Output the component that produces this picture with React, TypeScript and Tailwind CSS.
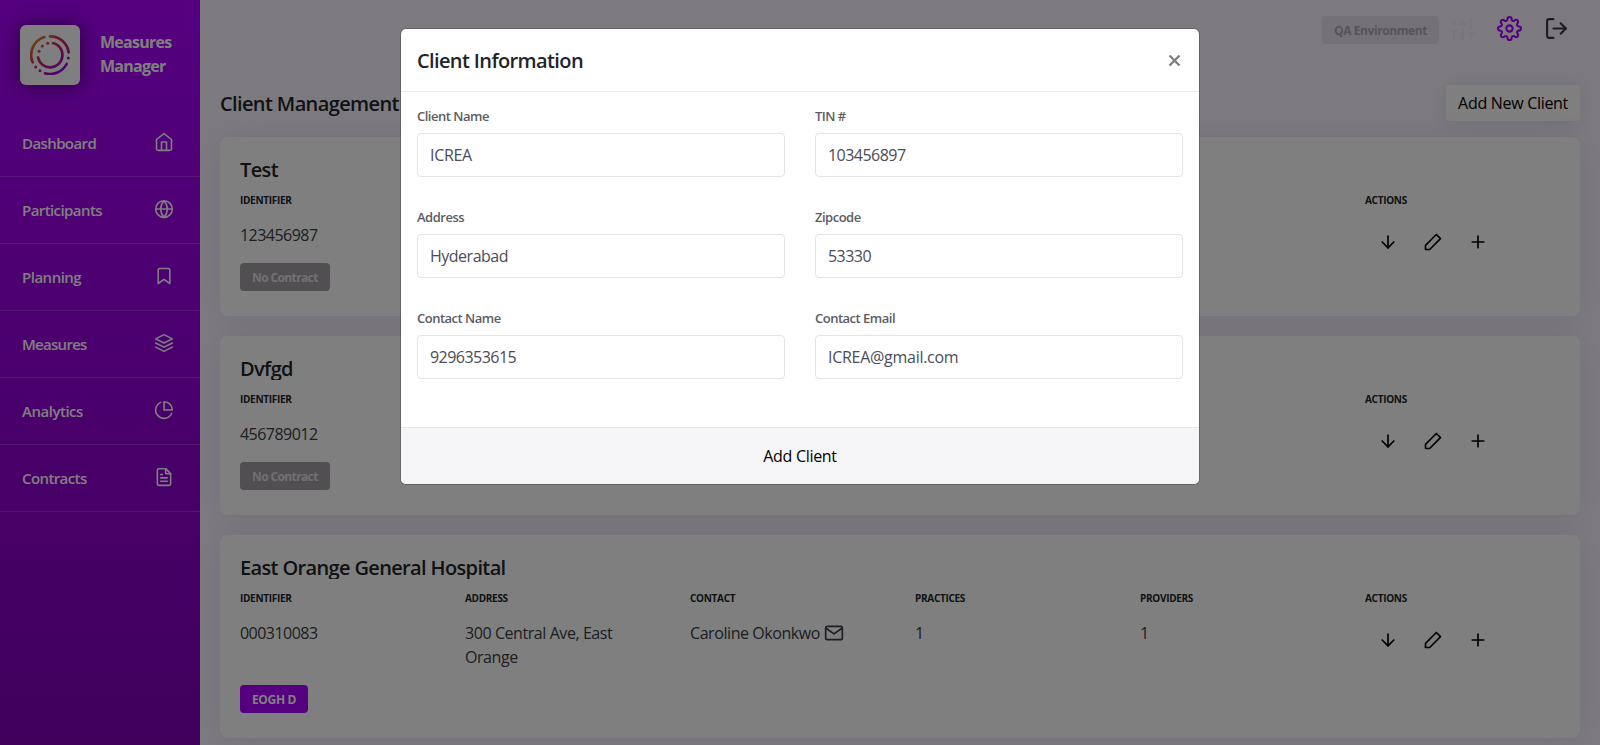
import React from "react";
import {
  FiArrowDown,
  FiBookmark,
  FiFileText,
  FiGlobe,
  FiHome,
  FiLayers,
  FiLogOut,
  FiMail,
  FiPieChart,
  FiPlus,
  FiSettings,
  FiSliders,
} from "react-icons/fi";

const navItems = [
  { label: "Dashboard", Icon: FiHome, tracking: "tracking-[-0.6px]" },
  { label: "Participants", Icon: FiGlobe, tracking: "tracking-[-0.58px]" },
  { label: "Planning", Icon: FiBookmark, tracking: "tracking-[-0.5px]" },
  { label: "Measures", Icon: FiLayers, tracking: "tracking-[-0.72px]" },
  { label: "Analytics", Icon: FiPieChart, tracking: "tracking-[-0.48px]" },
  { label: "Contracts", Icon: FiFileText, tracking: "tracking-[-0.6px]" },
];

type Client = {
  name: string;
  identifier: string;
  address?: string;
  contact?: string;
  practices?: string;
  providers?: string;
  contract?: string;
};

const clients: Client[] = [
  { name: "Test", identifier: "123456987" },
  { name: "Dvfgd", identifier: "456789012" },
  {
    name: "East Orange General Hospital",
    identifier: "000310083",
    address: "300 Central Ave, East Orange",
    contact: "Caroline Okonkwo",
    practices: "1",
    providers: "1",
    contract: "EOGH D",
  },
];

const fields = [
  { label: "Client Name", value: "ICREA", tracking: "tracking-[-0.3px]" },
  { label: "TIN #", value: "103456897", tracking: "tracking-[-0.53px]" },
  { label: "Address", value: "Hyderabad", tracking: "tracking-[-0.5px]" },
  { label: "Zipcode", value: "53330", tracking: "tracking-[-0.53px]" },
  { label: "Contact Name", value: "9296353615", tracking: "tracking-[-0.53px]" },
  { label: "Contact Email", value: "ICREA@gmail.com", tracking: "tracking-[-0.28px]" },
];

function Logo() {
  return (
    <svg width="40" height="40" viewBox="0 0 120 120" fill="none">
      <defs>
        <linearGradient id="ring" x1="10" y1="10" x2="100" y2="110" gradientUnits="userSpaceOnUse">
          <stop offset="0" stopColor="#e08a1e" />
          <stop offset="0.45" stopColor="#c8285f" />
          <stop offset="1" stopColor="#9a00e6" />
        </linearGradient>
      </defs>
      <g stroke="url(#ring)" strokeWidth="8" strokeLinecap="round">
        <path d="M8 82A56.500 56.500 0 0 1 43 6" />
        <path d="M60 4A56 56 0 0 1 116 52" />
        <path d="M110 87A56.500 56.500 0 0 1 45 115" />
        <path d="M69 24A37 37 0 1 1 24 67" />
      </g>
      <g fill="url(#ring)">
        <circle cx="115" cy="69" r="4.500" />
        <circle cx="30" cy="107" r="4.500" />
        <circle cx="17" cy="96" r="4.500" />
        <circle cx="53" cy="25" r="4.500" />
        <circle cx="37" cy="33" r="4.500" />
        <circle cx="27" cy="49" r="4.500" />
      </g>
    </svg>
  );
}

function PencilIcon() {
  return (
    <svg
      width="20"
      height="20"
      viewBox="0 0 24 24"
      fill="none"
      stroke="currentColor"
      strokeWidth="2"
      strokeLinecap="round"
      strokeLinejoin="round"
    >
      <polygon points="16 3 21 8 8 21 3 21 3 16 16 3" />
    </svg>
  );
}

function Sidebar() {
  return (
    <aside className="flex w-[200px] shrink-0 flex-col bg-linear-to-b from-[#aa00ff] to-[#8200b9] text-white">
      <div className="flex h-[110px] items-start gap-5 pt-[25px] pl-5">
        <div className="flex size-[60px] items-center justify-center rounded-md bg-white shadow-[0_0_20px_rgba(0,0,0,0.5)]">
          <Logo />
        </div>
        <div className="pt-[5px] text-[16px] leading-6 font-bold tracking-[-0.75px]">
          Measures
          <br />
          Manager
        </div>
      </div>
      <nav>
        {navItems.map(({ label, Icon, tracking }) => (
          <a
            key={label}
            className="flex h-[67px] items-center justify-between border-b border-white/20 pr-[26px] pl-[22px]"
          >
            <span className={`text-[15px] font-semibold ${tracking}`}>{label}</span>
            <Icon size={20} className="mb-0.5 stroke-[1.9]" />
          </a>
        ))}
      </nav>
    </aside>
  );
}

function Column({
  title,
  digits,
  children,
}: {
  title?: string;
  digits?: boolean;
  children?: React.ReactNode;
}) {
  return (
    <div className="w-[225px] shrink-0 pr-6 last:w-[215px] last:pr-0">
      <div className="h-[15px] text-[10px] leading-[15px] font-bold tracking-[-0.3px] text-[#212529]">{title}</div>
      <div
        className={`mt-[15px] text-[16px] leading-6 text-[#3a3d44] ${
          digits ? "tracking-[-0.53px]" : "tracking-[-0.43px]"
        }`}
      >
        {children}
      </div>
    </div>
  );
}

function ClientCard({ client }: { client: Client }) {
  return (
    <section className="rounded-lg bg-white pt-5 pb-[25px] pl-5 shadow-[0_0_30px_rgba(100,80,150,0.14)]">
      <h3 className="h-6 overflow-hidden text-[20px] leading-[26px] font-semibold tracking-[-0.64px] text-[#212529]">
        {client.name}
      </h3>
      <div className="mt-3 flex">
        <Column title="IDENTIFIER" digits>
          {client.identifier}
        </Column>
        <Column title={client.address && "ADDRESS"}>{client.address}</Column>
        <Column title={client.contact && "CONTACT"}>
          {client.contact && (
            <span className="flex items-center gap-1 whitespace-nowrap">
              {client.contact}
              <FiMail size={20} />
            </span>
          )}
        </Column>
        <Column title={client.practices && "PRACTICES"}>{client.practices}</Column>
        <Column title={client.providers && "PROVIDERS"}>{client.providers}</Column>
        <Column title="ACTIONS">
          <div className="flex h-6 items-center gap-[25px] pt-3.5 pl-[13px] text-black">
            <FiArrowDown size={20} className="shrink-0" />
            <PencilIcon />
            <FiPlus size={20} className="shrink-0" />
          </div>
        </Column>
      </div>
      <div
        className={`mt-4 flex h-7 w-fit items-center rounded px-3 pt-px text-[12px] font-bold ${
          client.contract
            ? "bg-[#aa00ff] tracking-[-0.35px] text-white"
            : "bg-[#a29fa5] tracking-[-0.62px] text-white/70"
        }`}
      >
        {client.contract ?? "No Contract"}
      </div>
    </section>
  );
}

function ClientModal() {
  return (
    <div className="absolute top-7 left-[400px] flex h-[457px] w-[800px] flex-col overflow-hidden rounded-md border border-black/20 bg-white bg-clip-padding">
      <header className="flex h-[63px] items-center justify-between border-b border-[#e9e9ed] px-4">
        <h2 className="pt-0.5 text-[20px] leading-[30px] font-semibold tracking-[-0.62px] text-[#212529]">
          Client Information
        </h2>
        <svg width="17" height="17" viewBox="0 0 17 17" stroke="#7f7f7f" strokeWidth="2.4">
          <path d="M3.500 3.500L13.500 13.500M13.500 3.500L3.500 13.500" />
        </svg>
      </header>
      <div className="grid flex-1 grid-cols-2 content-start gap-x-[30px] px-4 pt-[15px]">
        {fields.map((field) => (
          <label key={field.label} className="flex h-[101px] flex-col">
            <span className="h-[26px] text-[13px] leading-[18px] font-semibold tracking-[-0.5px] text-[#5b5c62]">
              {field.label}
            </span>
            <input
              readOnly
              value={field.value}
              className={`h-11 w-full rounded border border-[#e3e3e9] px-3 text-[16px] text-[#4a4d57] outline-none ${field.tracking}`}
            />
          </label>
        ))}
      </div>
      <footer className="flex h-[57px] items-center justify-center border-t border-[#e6e6ea] bg-[#f6f5f8]">
        <button className="text-[16px] tracking-[-0.3px] text-black">Add Client</button>
      </footer>
    </div>
  );
}

export default function App() {
  return (
    <div className="relative flex h-[745px] w-[1600px] overflow-hidden bg-[#faf5ff] font-['Open_Sans',sans-serif]">
      <Sidebar />
      <main className="flex min-w-0 flex-1 flex-col px-5">
        <div className="flex h-[85px] justify-end pt-4 pr-[11px]">
          <div className="mr-[11px] flex h-7 items-center rounded bg-[#e9e5ee] px-3 pt-px text-[12px] font-bold tracking-[-0.42px] text-[#ada9b3]">
            QA Environment
          </div>
          <div className="flex h-[25px] gap-[22px]">
            <FiSliders size={25} className="text-[#f1ecf6]" />
            <FiSettings size={25} className="text-[#aa00ff]" />
            <FiLogOut size={25} className="text-[#3a3640]" />
          </div>
        </div>
        <div className="flex h-[52px] items-start justify-between">
          <h1 className="pt-1 text-[20px] leading-[30px] font-semibold tracking-[-0.62px] text-[#212529]">
            Client Management
          </h1>
          <button className="h-9 rounded bg-white px-3 text-[16px] tracking-[-0.3px] text-black shadow-[0_0_20px_rgba(80,60,120,0.14)]">
            Add New Client
          </button>
        </div>
        <div className="flex flex-col gap-5">
          {clients.map((client) => (
            <ClientCard key={client.name} client={client} />
          ))}
        </div>
      </main>
      <div className="absolute inset-0 bg-black/50" />
      <ClientModal />
    </div>
  );
}
